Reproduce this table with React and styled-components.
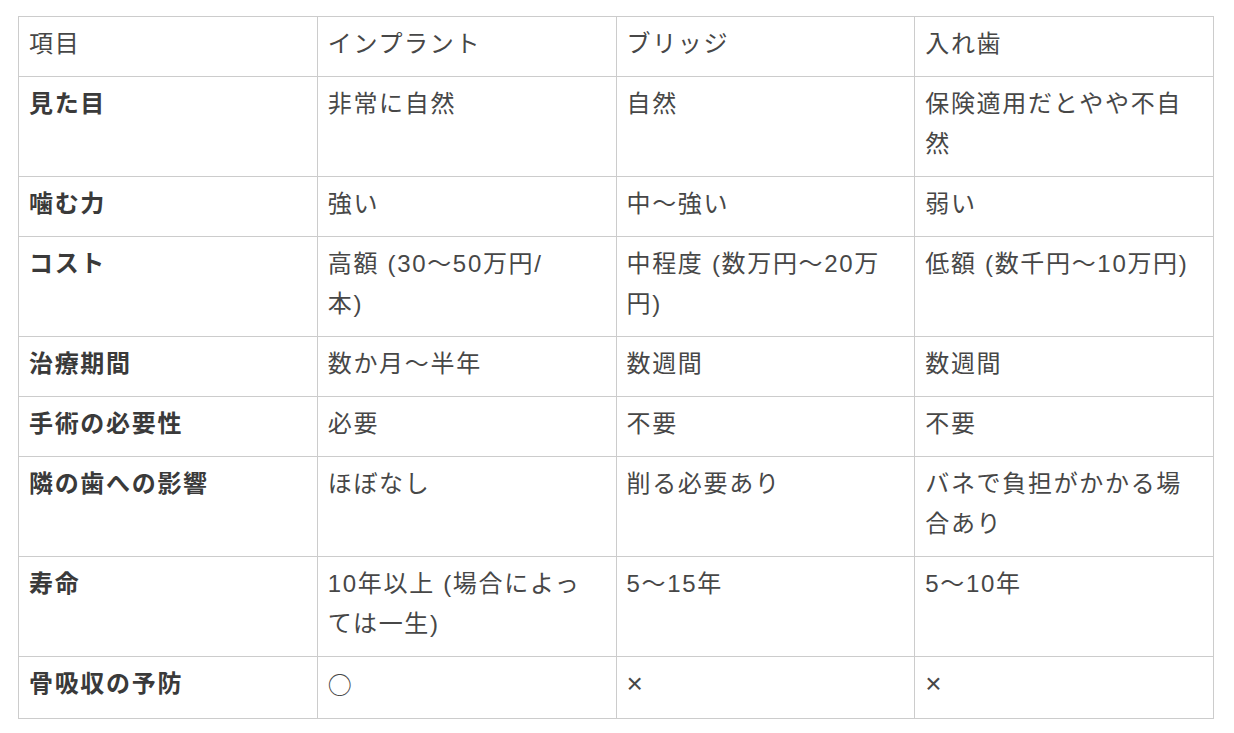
import React from 'react';
import styled, { createGlobalStyle } from 'styled-components';

const GlobalStyle = createGlobalStyle`
  html, body {
    margin: 0;
    padding: 0;
    background: #fff;
  }
  body {
    font-family: 'Liberation Sans', 'Noto Sans CJK JP', sans-serif;
    color: #444;
  }
`;

const header = ['項目', 'インプラント', 'ブリッジ', '入れ歯'];

// line breaks follow the original table's wrapping
const rows = [
  ['見た目', '非常に自然', '自然', '保険適用だとやや不自然'],
  ['噛む力', '強い', '中〜強い', '弱い'],
  ['コスト', ['高額 (30〜50万円/', '本)'], '中程度 (数万円〜20万円)', '低額 (数千円〜10万円)'],
  ['治療期間', '数か月〜半年', '数週間', '数週間'],
  ['手術の必要性', '必要', '不要', '不要'],
  ['隣の歯への影響', 'ほぼなし', '削る必要あり', 'バネで負担がかかる場合あり'],
  ['寿命', ['10年以上 (場合によっ', 'ては一生)'], '5〜15年', '5〜10年'],
  ['骨吸収の予防', { mark: '○' }, { mark: '×' }, { mark: '×' }],
];

const CellText = ({ value }) => {
  if (value && value.mark) {
    return <Mark circle={value.mark === '○'}>{value.mark}</Mark>;
  }
  if (!Array.isArray(value)) return value;
  return value.map((line, i) => (
    <React.Fragment key={i}>
      {i > 0 && <br />}
      {line}
    </React.Fragment>
  ));
};

const App = () => {
  return (
    <Page>
      <GlobalStyle />
      <Table>
        <thead>
          <tr>
            {header.map((h, i) => (
              <Cell key={i}>{h}</Cell>
            ))}
          </tr>
        </thead>
        <tbody>
          {rows.map((r, i) => (
            <tr key={i}>
              {r.map((c, j) => (
                <Cell key={j} label={j === 0}>
                  <CellText value={c} />
                </Cell>
              ))}
            </tr>
          ))}
        </tbody>
      </Table>
    </Page>
  );
};
export default App;

const Page = styled.div`
  padding: 16px 20px 0 18px;
`;

const Table = styled.table`
  width: 1196px;
  table-layout: fixed;
  border-collapse: collapse;
`;

const Cell = styled.td`
  border: 1px solid #cccccc;
  padding: 7px 10px 12px 10px;
  vertical-align: top;
  font-size: 24px;
  line-height: 40px;
  letter-spacing: 0.07em;
  font-weight: ${p => (p.label ? 700 : 400)};
  color: ${p => (p.label ? '#3a3a3a' : '#474747')};
  overflow-wrap: break-word;
`;

const Mark = styled.span`
  font-family: ${p => (p.circle ? "'Noto Sans CJK JP', sans-serif" : "'Liberation Sans', sans-serif")};
  font-size: ${p => (p.circle ? '24px' : '28px')};
`;
